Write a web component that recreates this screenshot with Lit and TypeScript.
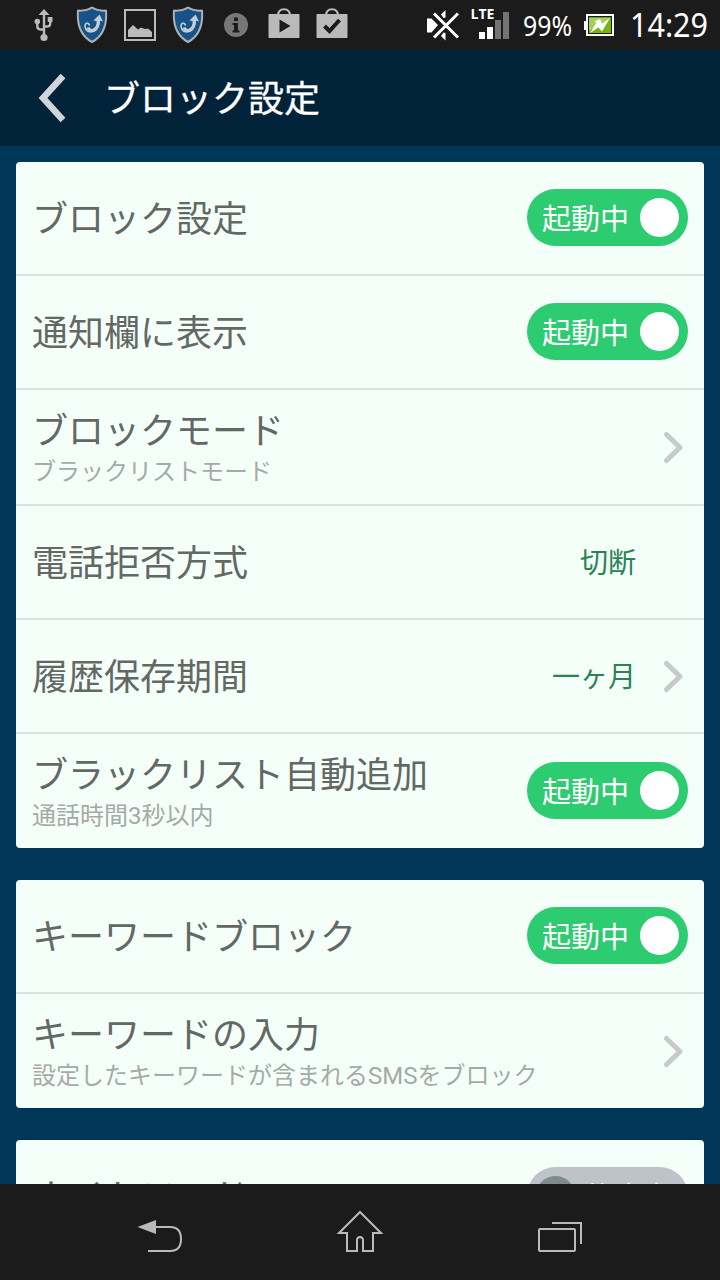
import { LitElement, html, css, nothing } from "lit";
import { customElement, property } from "lit/decorators.js";

interface Item {
  title: string;
  sub?: string;
  value?: string;
  chevron?: boolean;
  toggle?: "on" | "off";
}

const GROUPS: Item[][] = [
  [
    { title: "ブロック設定", toggle: "on" },
    { title: "通知欄に表示", toggle: "on" },
    { title: "ブロックモード", sub: "ブラックリストモード", chevron: true },
    { title: "電話拒否方式", value: "切断" },
    { title: "履歴保存期間", value: "一ヶ月", chevron: true },
    { title: "ブラックリスト自動追加", sub: "通話時間3秒以内", toggle: "on" },
  ],
  [
    { title: "キーワードブロック", toggle: "on" },
    { title: "キーワードの入力", sub: "設定したキーワードが含まれるSMSをブロック", chevron: true },
  ],
  [{ title: "ナイトモード", toggle: "off" }],
];

@customElement("toggle-switch")
class ToggleSwitch extends LitElement {
  @property({ type: Boolean }) on = false;
  static styles = css`
    :host { display: block; margin-bottom: 2px; }
    .track {
      box-sizing: border-box; width: 161px; height: 57px; border-radius: 28.5px;
      display: flex; align-items: center; justify-content: space-between;
      padding: 0 9px 0 15px; background: #2ecc71; color: #fff;
      font-size: 29px; line-height: 51px; white-space: nowrap;
    }
    .label { padding-top: 6px; }
    .track.off { flex-direction: row-reverse; background: #bdc3c7; padding: 0 17px 0 9px; }
    .knob { width: 39px; height: 39px; border-radius: 50%; background: #fff; flex: none; }
    .off .knob { background: #7f8c8d; }
  `;
  render() {
    return html`<div class="track ${this.on ? "" : "off"}">
      <span class="label">${this.on ? "起動中" : "停止中"}</span><span class="knob"></span>
    </div>`;
  }
}

@customElement("setting-row")
class SettingRow extends LitElement {
  @property({ attribute: false }) item!: Item;
  static styles = css`
    :host { display: block; }
    .row { display: flex; align-items: center; height: 112px; padding: 0 16px; }
    .row.two { height: 114px; }
    .texts { flex: 1; min-width: 0; padding-top: 4px; }
    .two .texts { padding-top: 2px; }
    .title { font-size: 36px; line-height: 48px; color: #646864; white-space: nowrap; }
    .sub { font-size: 24px; line-height: 32px; color: #a5aaa6; white-space: nowrap; }
    .value { font-size: 28px; line-height: 36px; padding-top: 4px; color: #2a8353; margin-right: 52px; }
    .value.near { margin-right: 22px; }
    .chev { display: block; width: 30px; height: 40px; }
  `;
  render() {
    const i = this.item;
    return html`<div class="row ${i.sub ? "two" : ""}">
      <div class="texts">
        <div class="title">${i.title}</div>
        ${i.sub ? html`<div class="sub">${i.sub}</div>` : nothing}
      </div>
      ${i.value ? html`<div class="value ${i.chevron ? "near" : ""}">${i.value}</div>` : nothing}
      ${i.chevron
        ? html`<svg class="chev" viewBox="0 0 30 40"><path d="M8.500 7.500L22 20.500L8.500 33.500" fill="none" stroke="#c7caca" stroke-width="5.200" stroke-linecap="round" stroke-linejoin="round"/></svg>`
        : nothing}
      ${i.toggle ? html`<toggle-switch ?on=${i.toggle === "on"}></toggle-switch>` : nothing}
    </div>`;
  }
}

const shield = html`<svg width="32" height="38" viewBox="0 0 32 38">
  <path d="M16 1.500C20 4 25 5 30 4.500C31 17 29 29 16 36C3 29 1 17 2 4.500C7 5 12 4 16 1.500Z" fill="#165388" stroke="#adb1b5" stroke-width="2" stroke-linejoin="round"/>
  <path d="M12 21.500C14 27.500 22.500 25 22.500 14" fill="none" stroke="#c3ccd3" stroke-width="3.400"/>
  <path d="M13.500 19.500C13 16.500 9 16.500 9 20C9 24 12 26.500 16 25.500" fill="none" stroke="#c3ccd3" stroke-width="1.600"/>
  <path d="M17.500 14.500L23.500 8.500L27 15.500L23.500 14.500L20.500 15.200Z" fill="#c3ccd3"/>
</svg>`;

@customElement("status-bar")
class StatusBar extends LitElement {
  static styles = css`
    :host { display: block; }
    .bar {
      height: 50px; display: flex; align-items: center; justify-content: space-between;
      background: #1b1b1b; color: #fff; padding: 0 12px 0 28px;
      font-family: "Noto Sans", "Open Sans", sans-serif;
    }
    .left { display: flex; align-items: center; }
    .cell { width: 32px; height: 50px; margin-right: 16px; display: flex; align-items: center; justify-content: center; }
    .right { display: flex; align-items: center; height: 50px; }
    svg { display: block; flex: none; }
    .net { margin-left: 12px; overflow: visible; }
    .lte { font: 700 14px "Open Sans", "Noto Sans", sans-serif; }
    .pct { font-size: 27px; margin-left: 13px; }
    .batt { margin-left: 11px; }
    .clock { font-size: 32px; margin-left: 16px; }
    .fit { display: block; overflow: visible; }
  `;
  render() {
    return html`<div class="bar">
      <div class="left">
        <div class="cell"><svg width="20" height="34" viewBox="0 0 20 34">
          <path d="M10 5V28M3.300 13V18.500Q3.300 21.300 6.500 21.500H10M16.200 11V15.500Q16.200 18.300 13.500 18.500H10" fill="none" stroke="#bababa" stroke-width="2.400"/>
          <path d="M10 1L15.500 7H4.500Z" fill="#bababa"/><circle cx="10" cy="29.500" r="3.600" fill="#bababa"/><circle cx="3.300" cy="13.500" r="2.800" fill="#bababa"/><path d="M13.700 9H18.500V14H13.700Z" fill="#bababa"/>
        </svg></div>
        <div class="cell">${shield}</div>
        <div class="cell"><svg width="32" height="32" viewBox="0 0 32 32">
          <rect x="1" y="1" width="30" height="30" fill="none" stroke="#bababa" stroke-width="2"/>
          <path d="M4 28V21L9 16L14 20.500L17 18.500L21 20L24 19.500L28 23V28Z" fill="#bababa"/>
        </svg></div>
        <div class="cell">${shield}</div>
        <div class="cell"><svg width="24" height="24" viewBox="0 0 24 24">
          <circle cx="12" cy="12" r="12" fill="#777"/><path d="M10 4.500H14V8H10ZM8.500 10H14V17.500H15.500V19.500H8.500V17.500H10V12H8.500Z" fill="#1b1b1b"/>
        </svg></div>
        <div class="cell"><svg width="32" height="36" viewBox="0 0 32 36">
          <path d="M10 9Q10 2.300 16 2.300T22 9" fill="none" stroke="#bababa" stroke-width="2"/><rect x="0.500" y="7" width="31" height="24" rx="1" fill="#bababa"/><path d="M11.500 12.500L22.500 19L11.500 25.500Z" fill="#1b1b1b"/>
        </svg></div>
        <div class="cell"><svg width="32" height="36" viewBox="0 0 32 36">
          <path d="M10 9Q10 2.300 16 2.300T22 9" fill="none" stroke="#bababa" stroke-width="2"/><rect x="0.500" y="7" width="31" height="24" rx="1" fill="#bababa"/><path d="M8.500 19L13.500 24L23.500 13" fill="none" stroke="#1b1b1b" stroke-width="4"/>
        </svg></div>
      </div>
      <div class="right">
        <svg width="32" height="32" viewBox="0 0 32 32">
          <path d="M-0.500 9.500H4.500L11 16L4.500 23.500H-0.500ZM14 5.500L18.500 1V8.500L16.500 9ZM14 27L18.500 31.500V24L16.500 23.500Z" fill="#fff"/>
          <path d="M7 4.500L31 28.500M31 4.500L7 28.500" stroke="#1b1b1b" stroke-width="5.500"/><path d="M7 4.500L31 28.500M31 4.500L7 28.500" stroke="#fff" stroke-width="3"/>
        </svg>
        <svg class="net" width="39" height="34" viewBox="0 0 39 34">
          <text class="lte" x="-0.500" y="10.500" fill="#fff" textLength="24" lengthAdjust="spacingAndGlyphs">LTE</text>
          <path d="M8 24h6v7H8zM16 19h6v12h-6z" fill="#fff"/><path d="M24 12h6v19h-6zM32 4h6v27h-6z" fill="#747474"/>
        </svg>
        <svg class="pct fit" width="50" height="50" viewBox="0 0 50 50"><text x="0" y="36" fill="#fff" textLength="49" lengthAdjust="spacingAndGlyphs">99%</text></svg>
        <svg class="batt" width="31" height="23" viewBox="0 0 31 23">
          <path d="M0 7h3v9H0z" fill="#fff"/><rect x="3" y="1" width="26" height="20" fill="#1b1b1b" stroke="#fff" stroke-width="2"/>
          <rect x="5" y="3.500" width="22" height="15.500" fill="#76b60a"/><path d="M5 3.500H27L5 17Z" fill="#a4cf5a"/>
          <path d="M6 19L12.500 8.500L10.500 7.500L16 5L18 9.500L26 4L18 17.500L14.500 13.500Z" fill="#fff"/>
        </svg>
        <svg class="clock fit" width="77" height="50" viewBox="0 0 77 50"><text x="-1" y="37" fill="#fff" textLength="78" lengthAdjust="spacingAndGlyphs">14:29</text></svg>
      </div>
    </div>`;
  }
}

@customElement("app-root")
class AppRoot extends LitElement {
  static styles = css`
    :host {
      display: flex; flex-direction: column; width: 720px; height: 1280px; overflow: hidden;
      background: #003759; font-family: Roboto, "Noto Sans CJK JP", sans-serif;
    }
    .header { flex: none; height: 96px; background: #002339; display: flex; align-items: center; padding-left: 36px; gap: 36px; }
    .header svg { display: block; }
    .heading { color: #fff; font-size: 36px; line-height: 48px; padding-top: 4px; -webkit-text-stroke: 0.3px currentColor; }
    .content { flex: 1; min-height: 0; overflow: hidden; padding: 16px 16px 0; display: flex; flex-direction: column; gap: 32px; }
    .card { flex: none; background: #f5fffa; border-radius: 4px; overflow: hidden; }
    .card setting-row + setting-row { border-top: 2px solid #d9e2dd; }
    .nav { flex: none; height: 96px; background: #1b1b1b; display: flex; justify-content: center; align-items: center; }
    .nav svg { display: block; width: 200px; height: 96px; }
  `;
  render() {
    return html`
      <status-bar></status-bar>
      <div class="header">
        <svg width="32" height="50" viewBox="0 0 32 50"><path d="M27 3L7 25L27 47" fill="none" stroke="#cfd5da" stroke-width="6.500"/></svg>
        <div class="heading">ブロック設定</div>
      </div>
      <div class="content">
        ${GROUPS.map((g) => html`<div class="card">${g.map((i) => html`<setting-row .item=${i}></setting-row>`)}</div>`)}
      </div>
      <div class="nav">
        <svg viewBox="0 0 200 96"><path d="M95 43H110Q121 43 121 55T110 67H88" fill="none" stroke="#bababa" stroke-width="2"/><path d="M77.500 43L96 36V50Z" fill="#bababa"/></svg>
        <svg viewBox="0 0 200 96"><path d="M100 28L121 49H113V67H103V56.500Q103 53 100 53T97 56.500V67H87V49H79Z" fill="none" stroke="#bababa" stroke-width="2"/></svg>
        <svg viewBox="0 0 200 96"><rect x="79" y="45" width="36" height="22" rx="1" fill="none" stroke="#bababa" stroke-width="2"/><path d="M92 39H121V60" fill="none" stroke="#bababa" stroke-width="2"/></svg>
      </div>
    `;
  }
}
